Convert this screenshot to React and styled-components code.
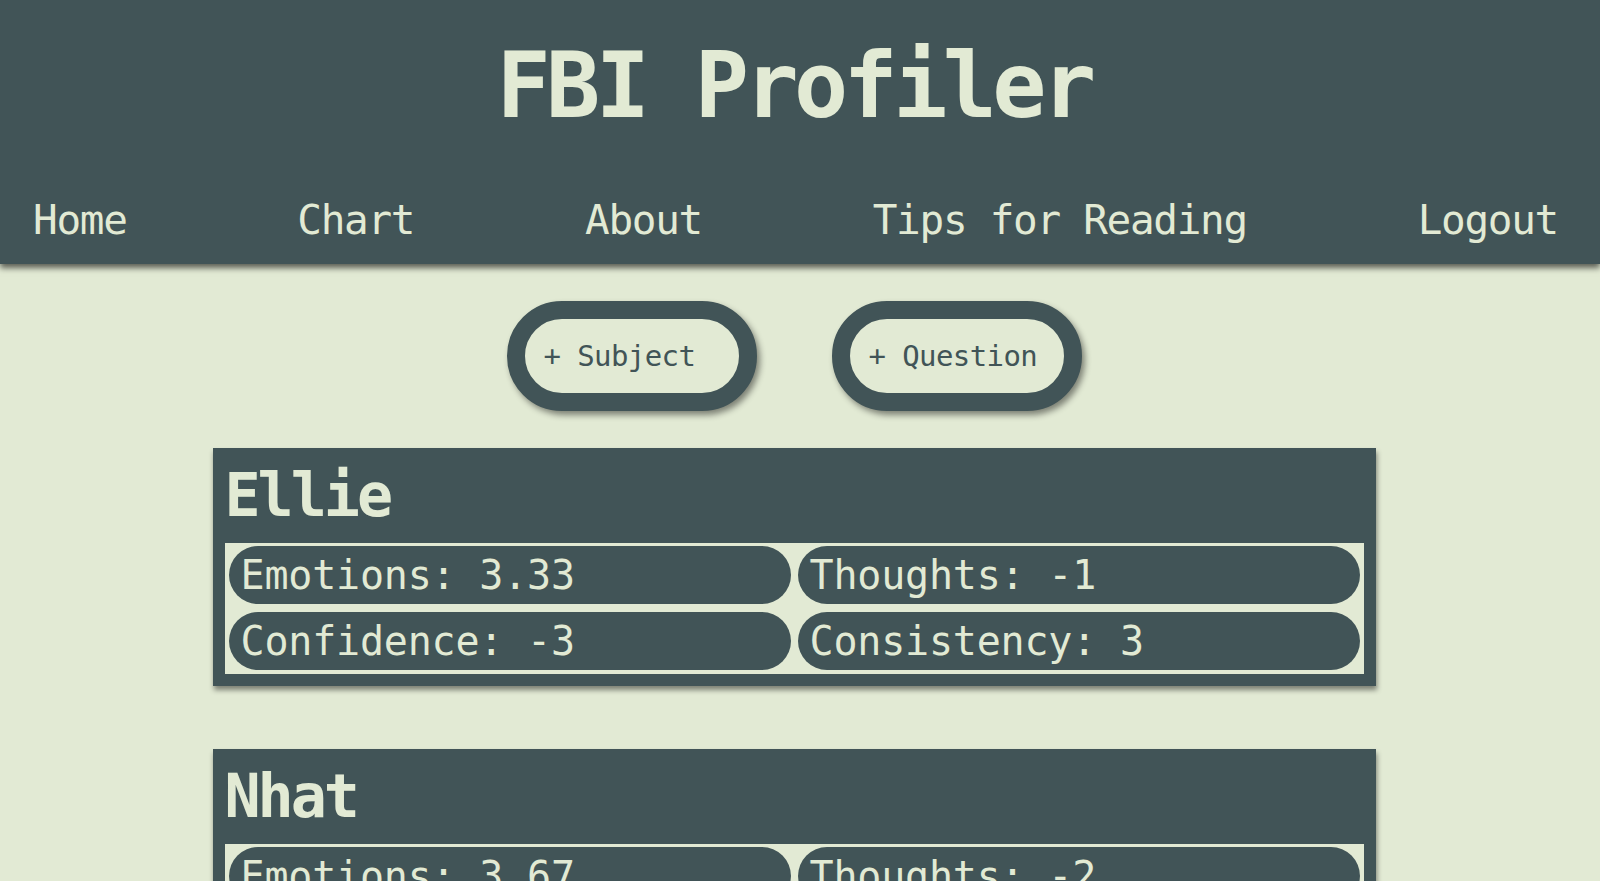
import React from "react";
import styled, { createGlobalStyle } from "styled-components";

const DARK = "#415457";
const LIGHT = "#e2ead4";

const subjects = [
  {
    name: "Ellie",
    stats: [
      ["Emotions", "3.33"],
      ["Thoughts", "-1"],
      ["Confidence", "-3"],
      ["Consistency", "3"],
    ],
  },
  {
    name: "Nhat",
    stats: [
      ["Emotions", "3.67"],
      ["Thoughts", "-2"],
      ["Confidence", "1"],
      ["Consistency", "2.5"],
    ],
  },
];

const navLinks = ["Home", "Chart", "About", "Tips for Reading", "Logout"];

function App() {
  return (
    <>
      <GlobalStyle />
      <Header>
        <Title>FBI Profiler</Title>
        <Nav>
          {navLinks.map((link) => (
            <NavLink key={link} href="#">
              {link}
            </NavLink>
          ))}
        </Nav>
      </Header>
      <Main>
        <ButtonRow>
          <AddButton>+ Subject</AddButton>
          <AddButton>+ Question</AddButton>
        </ButtonRow>
        {subjects.map((subject) => (
          <SubjectCard key={subject.name}>
            <SubjectName>{subject.name}</SubjectName>
            <StatGrid>
              {subject.stats.map(([label, value]) => (
                <StatPill key={label}>
                  {label}: {value}
                </StatPill>
              ))}
            </StatGrid>
          </SubjectCard>
        ))}
      </Main>
    </>
  );
}

export default App;

const GlobalStyle = createGlobalStyle`
  * {
    box-sizing: border-box;
  }

  body {
    margin: 0;
    background: ${LIGHT};
    font-family: "DejaVu Sans Mono", "Liberation Mono", monospace;
    color: ${LIGHT};
    overflow: hidden;
  }
`;

const Header = styled.header`
  position: relative;
  z-index: 1;
  display: flex;
  flex-direction: column;
  align-items: center;
  padding: 41px 12px 23px 0;
  background: ${DARK};
  box-shadow: 0 4px 6px rgba(0, 0, 0, 0.6);
`;

const Title = styled.h1`
  margin: 0;
  font-size: 90px;
  line-height: 1;
  font-weight: bold;
  letter-spacing: -4.6px;
  color: ${LIGHT};
`;

const Nav = styled.nav`
  display: flex;
  justify-content: space-between;
  align-self: stretch;
  margin-top: 69px;
  padding: 0 30px 0 33px;
`;

const NavLink = styled.a`
  font-size: 41px;
  line-height: 1;
  letter-spacing: -1.3px;
  color: ${LIGHT};
  text-decoration: none;
`;

const Main = styled.main`
  display: flex;
  flex-direction: column;
  align-items: center;
  padding: 37px 12px 0 0;
`;

const ButtonRow = styled.div`
  display: flex;
  gap: 75px;
  margin-bottom: 37px;
`;

const AddButton = styled.button`
  display: flex;
  align-items: center;
  width: 250px;
  height: 110px;
  padding: 0 0 0 19px;
  border: 18px solid ${DARK};
  border-radius: 55px;
  background: ${LIGHT};
  color: ${DARK};
  font-family: "DejaVu Sans Mono", "Liberation Mono", monospace;
  font-size: 29px;
  line-height: 1;
  letter-spacing: -0.6px;
  box-shadow: 3px 4px 6px rgba(0, 0, 0, 0.45);
  cursor: pointer;
`;

const SubjectCard = styled.section`
  width: 1163px;
  padding: 17px 12px 12px;
  margin-bottom: 63px;
  background: ${DARK};
  box-shadow: 1px 4px 5px rgba(0, 0, 0, 0.45);
`;

const SubjectName = styled.h2`
  margin: 0 0 18px 0;
  font-size: 60px;
  line-height: 1;
  font-weight: bold;
  letter-spacing: -3px;
  color: ${LIGHT};
`;

const StatGrid = styled.div`
  display: grid;
  grid-template-columns: 1fr 1fr;
  column-gap: 7px;
  row-gap: 8px;
  padding: 3px 4px 4px;
  background: ${LIGHT};
`;

const StatPill = styled.div`
  display: flex;
  align-items: center;
  height: 58px;
  padding-left: 12px;
  border-radius: 29px;
  background: ${DARK};
  color: ${LIGHT};
  font-size: 40px;
  line-height: 1;
  letter-spacing: -0.2px;
`;
